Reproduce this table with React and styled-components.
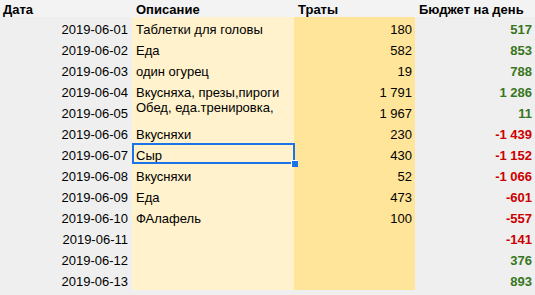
import React from 'react';
import styled, { createGlobalStyle } from 'styled-components';

const GlobalStyle = createGlobalStyle`
  html, body {
    margin: 0;
    padding: 0;
    background: #efefef;
  }
  body {
    font-family: "Liberation Sans", Arial, sans-serif;
    font-size: 13px;
    color: #000;
  }
`;

const Sheet = styled.div`
  display: grid;
  grid-template-columns: 132px 162px 121px 120px;
  grid-template-rows: 17px repeat(13, 21px);
  width: 535px;
  height: 295px;
  overflow: hidden;
  background: #efefef;
`;

const HeadCell = styled.div`
  display: flex;
  align-items: flex-end;
  padding-left: ${(p) => p.$pad}px;
  background: #f3f3f3;
  font-weight: bold;
  line-height: 15px;
  white-space: nowrap;
`;

const Cell = styled.div`
  position: relative;
  display: flex;
  align-items: flex-end;
  justify-content: ${(p) => (p.$right ? 'flex-end' : 'flex-start')};
  padding: 0 ${(p) => (p.$right ? 3 : 0)}px ${(p) => (p.$raised ? 7 : 1)}px ${(p) => (p.$right ? 0 : 4)}px;
  background: ${(p) => p.$bg};
  line-height: 15px;
  white-space: nowrap;
  overflow: visible;
`;

const DateCell = styled(Cell)`
  padding-right: 4px;
`;

const Budget = styled.span`
  font-weight: bold;
  color: ${(p) => (p.$neg ? '#cc0000' : '#38761d')};
`;

const Selection = styled.div`
  position: absolute;
  z-index: 2;
  top: 0;
  left: 0;
  right: -1px;
  bottom: 0;
  border: 2px solid #1a73e8;
  pointer-events: none;

  &::after {
    content: '';
    position: absolute;
    right: -5px;
    bottom: -5px;
    width: 6px;
    height: 6px;
    background: #1a73e8;
    border: 1px solid #fff;
    border-width: 1px 0 0 1px;
  }
`;

const rows = [
  { date: '2019-06-01', desc: 'Таблетки для головы', cost: '180', budget: '517' },
  { date: '2019-06-02', desc: 'Еда', cost: '582', budget: '853' },
  { date: '2019-06-03', desc: 'один огурец', cost: '19', budget: '788' },
  { date: '2019-06-04', desc: 'Вкусняха, презы,пироги', cost: '1\u00a0791', budget: '1\u00a0286' },
  { date: '2019-06-05', desc: 'Обед, еда.тренировка,', cost: '1\u00a0967', budget: '11', raised: true },
  { date: '2019-06-06', desc: 'Вкусняхи', cost: '230', budget: '-1\u00a0439' },
  { date: '2019-06-07', desc: 'Сыр', cost: '430', budget: '-1\u00a0152', selected: true },
  { date: '2019-06-08', desc: 'Вкусняхи', cost: '52', budget: '-1\u00a0066' },
  { date: '2019-06-09', desc: 'Еда', cost: '473', budget: '-601' },
  { date: '2019-06-10', desc: 'ФАлафель', cost: '100', budget: '-557' },
  { date: '2019-06-11', desc: '', cost: '', budget: '-141' },
  { date: '2019-06-12', desc: '', cost: '', budget: '376' },
  { date: '2019-06-13', desc: '', cost: '', budget: '893' },
];

const App = () => {
  return (
    <>
      <GlobalStyle />
      <Sheet>
        <HeadCell $pad={3}>Дата</HeadCell>
        <HeadCell $pad={4}>Описание</HeadCell>
        <HeadCell $pad={4}>Траты</HeadCell>
        <HeadCell $pad={4}>Бюджет на день</HeadCell>
        {rows.map((r) => (
          <React.Fragment key={r.date}>
            <DateCell $right $bg="#efefef">{r.date}</DateCell>
            <Cell $bg="#fff2cc" $raised={r.raised}>
              {r.desc}
              {r.selected && <Selection />}
            </Cell>
            <Cell $right $bg="#ffe599">{r.cost}</Cell>
            <Cell $right $bg="#efefef">
              <Budget $neg={r.budget.startsWith('-')}>{r.budget}</Budget>
            </Cell>
          </React.Fragment>
        ))}
      </Sheet>
    </>
  );
};

export default App;
